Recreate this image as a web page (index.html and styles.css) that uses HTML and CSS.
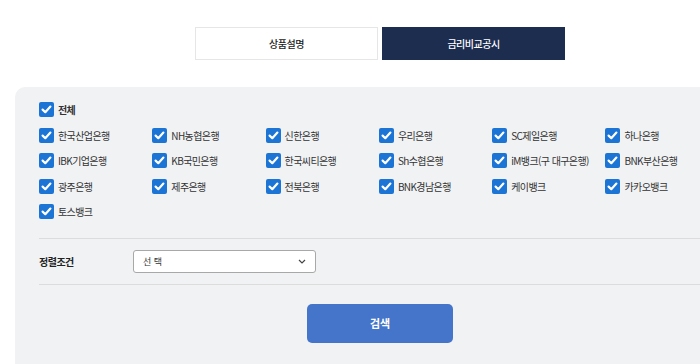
FILE: index.html
```html
<!DOCTYPE html>
<html lang="ko">
<head>
<meta charset="utf-8">
<link rel="stylesheet" href="styles.css">
</head>
<body>
<div class="tabs">
  <div class="tab">상품설명</div>
  <div class="tab active">금리비교공시</div>
</div>
<div class="panel">
  <label class="chk all"><span class="box"><svg viewBox="0 0 15 15" width="15" height="15"><path d="M3.6 7.6 L6.3 10.2 L11.4 4.6" fill="none" stroke="#fff" stroke-width="2.2" stroke-linecap="round" stroke-linejoin="round"/></svg></span>전체</label>
  <div class="grid">
    <label class="chk"><span class="box"><svg viewBox="0 0 15 15" width="15" height="15"><path d="M3.6 7.6 L6.3 10.2 L11.4 4.6" fill="none" stroke="#fff" stroke-width="2.2" stroke-linecap="round" stroke-linejoin="round"/></svg></span>한국산업은행</label>
    <label class="chk"><span class="box"><svg viewBox="0 0 15 15" width="15" height="15"><path d="M3.6 7.6 L6.3 10.2 L11.4 4.6" fill="none" stroke="#fff" stroke-width="2.2" stroke-linecap="round" stroke-linejoin="round"/></svg></span>NH농협은행</label>
    <label class="chk"><span class="box"><svg viewBox="0 0 15 15" width="15" height="15"><path d="M3.6 7.6 L6.3 10.2 L11.4 4.6" fill="none" stroke="#fff" stroke-width="2.2" stroke-linecap="round" stroke-linejoin="round"/></svg></span>신한은행</label>
    <label class="chk"><span class="box"><svg viewBox="0 0 15 15" width="15" height="15"><path d="M3.6 7.6 L6.3 10.2 L11.4 4.6" fill="none" stroke="#fff" stroke-width="2.2" stroke-linecap="round" stroke-linejoin="round"/></svg></span>우리은행</label>
    <label class="chk"><span class="box"><svg viewBox="0 0 15 15" width="15" height="15"><path d="M3.6 7.6 L6.3 10.2 L11.4 4.6" fill="none" stroke="#fff" stroke-width="2.2" stroke-linecap="round" stroke-linejoin="round"/></svg></span>SC제일은행</label>
    <label class="chk"><span class="box"><svg viewBox="0 0 15 15" width="15" height="15"><path d="M3.6 7.6 L6.3 10.2 L11.4 4.6" fill="none" stroke="#fff" stroke-width="2.2" stroke-linecap="round" stroke-linejoin="round"/></svg></span>하나은행</label>
    <label class="chk"><span class="box"><svg viewBox="0 0 15 15" width="15" height="15"><path d="M3.6 7.6 L6.3 10.2 L11.4 4.6" fill="none" stroke="#fff" stroke-width="2.2" stroke-linecap="round" stroke-linejoin="round"/></svg></span>IBK기업은행</label>
    <label class="chk"><span class="box"><svg viewBox="0 0 15 15" width="15" height="15"><path d="M3.6 7.6 L6.3 10.2 L11.4 4.6" fill="none" stroke="#fff" stroke-width="2.2" stroke-linecap="round" stroke-linejoin="round"/></svg></span>KB국민은행</label>
    <label class="chk"><span class="box"><svg viewBox="0 0 15 15" width="15" height="15"><path d="M3.6 7.6 L6.3 10.2 L11.4 4.6" fill="none" stroke="#fff" stroke-width="2.2" stroke-linecap="round" stroke-linejoin="round"/></svg></span>한국씨티은행</label>
    <label class="chk"><span class="box"><svg viewBox="0 0 15 15" width="15" height="15"><path d="M3.6 7.6 L6.3 10.2 L11.4 4.6" fill="none" stroke="#fff" stroke-width="2.2" stroke-linecap="round" stroke-linejoin="round"/></svg></span>Sh수협은행</label>
    <label class="chk"><span class="box"><svg viewBox="0 0 15 15" width="15" height="15"><path d="M3.6 7.6 L6.3 10.2 L11.4 4.6" fill="none" stroke="#fff" stroke-width="2.2" stroke-linecap="round" stroke-linejoin="round"/></svg></span>iM뱅크(구 대구은행)</label>
    <label class="chk"><span class="box"><svg viewBox="0 0 15 15" width="15" height="15"><path d="M3.6 7.6 L6.3 10.2 L11.4 4.6" fill="none" stroke="#fff" stroke-width="2.2" stroke-linecap="round" stroke-linejoin="round"/></svg></span>BNK부산은행</label>
    <label class="chk"><span class="box"><svg viewBox="0 0 15 15" width="15" height="15"><path d="M3.6 7.6 L6.3 10.2 L11.4 4.6" fill="none" stroke="#fff" stroke-width="2.2" stroke-linecap="round" stroke-linejoin="round"/></svg></span>광주은행</label>
    <label class="chk"><span class="box"><svg viewBox="0 0 15 15" width="15" height="15"><path d="M3.6 7.6 L6.3 10.2 L11.4 4.6" fill="none" stroke="#fff" stroke-width="2.2" stroke-linecap="round" stroke-linejoin="round"/></svg></span>제주은행</label>
    <label class="chk"><span class="box"><svg viewBox="0 0 15 15" width="15" height="15"><path d="M3.6 7.6 L6.3 10.2 L11.4 4.6" fill="none" stroke="#fff" stroke-width="2.2" stroke-linecap="round" stroke-linejoin="round"/></svg></span>전북은행</label>
    <label class="chk"><span class="box"><svg viewBox="0 0 15 15" width="15" height="15"><path d="M3.6 7.6 L6.3 10.2 L11.4 4.6" fill="none" stroke="#fff" stroke-width="2.2" stroke-linecap="round" stroke-linejoin="round"/></svg></span>BNK경남은행</label>
    <label class="chk"><span class="box"><svg viewBox="0 0 15 15" width="15" height="15"><path d="M3.6 7.6 L6.3 10.2 L11.4 4.6" fill="none" stroke="#fff" stroke-width="2.2" stroke-linecap="round" stroke-linejoin="round"/></svg></span>케이뱅크</label>
    <label class="chk"><span class="box"><svg viewBox="0 0 15 15" width="15" height="15"><path d="M3.6 7.6 L6.3 10.2 L11.4 4.6" fill="none" stroke="#fff" stroke-width="2.2" stroke-linecap="round" stroke-linejoin="round"/></svg></span>카카오뱅크</label>
    <label class="chk"><span class="box"><svg viewBox="0 0 15 15" width="15" height="15"><path d="M3.6 7.6 L6.3 10.2 L11.4 4.6" fill="none" stroke="#fff" stroke-width="2.2" stroke-linecap="round" stroke-linejoin="round"/></svg></span>토스뱅크</label>
  </div>
  <div class="sort">
    <div class="sort-label">정렬조건</div>
    <div class="select"><span>선 택</span><svg viewBox="0 0 8 5" width="8" height="5"><path d="M1 1 L4 4 L7 1" fill="none" stroke="#444" stroke-width="1.2"/></svg></div>
  </div>
  <div class="actions">
    <button class="search">검색</button>
  </div>
</div>
</body>
</html>
```

FILE: styles.css
```css
html, body {
  margin: 0;
  padding: 0;
  background: #fff;
  font-family: "Noto Sans CJK KR", "Noto Sans", sans-serif;
  color: #333;
}
body {
  width: 700px;
  height: 364px;
  overflow: hidden;
}
.tabs {
  display: flex;
  gap: 4px;
  padding-top: 27px;
  margin-left: 195px;
}
.tab {
  width: 183px;
  height: 33px;
  box-sizing: border-box;
  border: 1px solid #e6e6e6;
  display: flex;
  align-items: center;
  justify-content: center;
  font-size: 10px;
  font-weight: 500;
  color: #222;
  letter-spacing: -0.5px;
  background: #fff;
}
.tab.active {
  background: #1c2d4f;
  border-color: #1c2d4f;
  color: #fff;
}
.panel {
  margin-top: 27px;
  margin-left: 15px;
  background: #f1f2f4;
  border-top-left-radius: 10px;
  padding: 15px 0 0 24px;
  height: 277px;
  box-sizing: border-box;
}
.chk {
  display: flex;
  align-items: center;
  gap: 4px;
  height: 15px;
  font-size: 10px;
  letter-spacing: -0.6px;
  color: #333;
  white-space: nowrap;
}
.chk.all {
  font-weight: 700;
  margin-bottom: 11px;
}
.box {
  width: 15px;
  height: 15px;
  border-radius: 2px;
  background: #1c74d4;
  display: flex;
  flex: none;
}
.grid {
  display: grid;
  grid-template-columns: repeat(6, 113.3px);
  row-gap: 10.3px;
}
.sort {
  margin-top: 19px;
  border-top: 1px solid #dcdcdc;
  border-bottom: 1px solid #dcdcdc;
  height: 45px;
  display: flex;
  align-items: center;
}
.sort-label {
  width: 94px;
  font-size: 10px;
  font-weight: 700;
  letter-spacing: -0.5px;
  color: #222;
}
.select {
  width: 183px;
  height: 23px;
  box-sizing: border-box;
  border: 1px solid #a8a8a8;
  border-radius: 3px;
  background: #fff;
  display: flex;
  align-items: center;
  justify-content: space-between;
  padding: 0 9px 0 9px;
  font-size: 9px;
  color: #333;
}
.actions {
  padding-top: 19px;
  padding-left: 268px;
}
.search {
  width: 146px;
  height: 39px;
  border: none;
  border-radius: 5px;
  background: #4575ca;
  color: #fff;
  font-family: "Noto Sans CJK KR", sans-serif;
  font-size: 11px;
  font-weight: 700;
}
```
